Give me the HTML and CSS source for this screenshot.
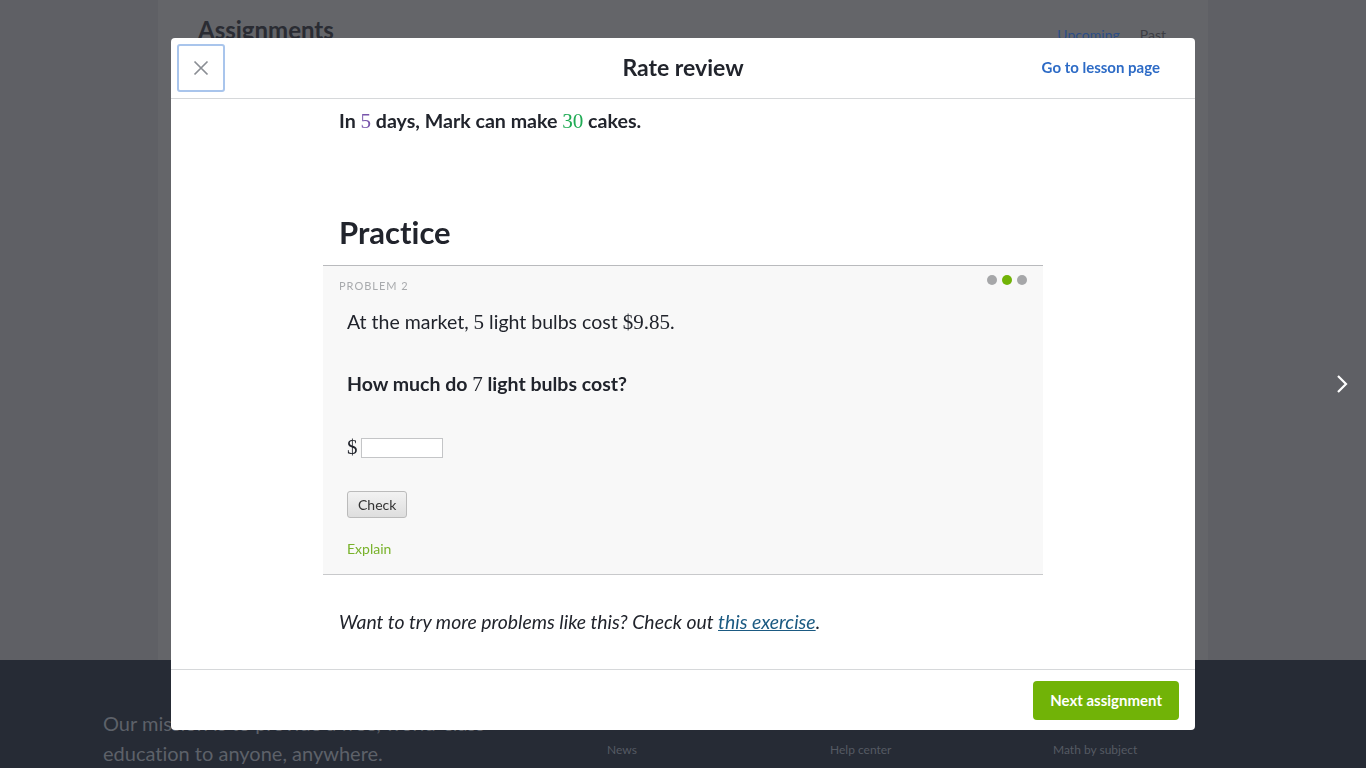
FILE: index.html
```html
<!DOCTYPE html>
<html lang="en">
<head>
    <meta charset="UTF-8">
    <meta name="viewport" content="width=device-width, initial-scale=1.0">
    <title>Rate review</title>
    <link rel="stylesheet" href="styles.css">
</head>
<body>
    <div class="page">
        <div class="page-main">
            <div class="page-head">
                <h1>Assignments</h1>
                <div class="page-tabs">
                    <a class="tab active">Upcoming</a>
                    <a class="tab">Past</a>
                </div>
            </div>
        </div>
        <footer class="site-footer">
            <p class="mission">Our mission is to provide a free, world-class education to anyone, anywhere.</p>
            <div class="footer-links">
                <span>News</span>
                <span>Help center</span>
                <span>Math by subject</span>
            </div>
        </footer>
    </div>

    <div class="modal">
        <div class="modal-header">
            <div class="close-cell">
                <button class="close-btn" aria-label="Close">
                    <svg width="16" height="16" viewBox="0 0 16 16">
                        <path d="M1.5 1.5 L14.5 14.5 M14.5 1.5 L1.5 14.5" stroke="#8a8e94" stroke-width="1.7" fill="none"/>
                    </svg>
                </button>
            </div>
            <h2 class="modal-title">Rate review</h2>
            <div class="lesson-cell"><a class="lesson-link">Go to lesson page</a></div>
        </div>

        <div class="modal-body">
            <div class="content">
                <p class="lead">In <span class="num purple">5</span> days, Mark can make <span class="num green">30</span> cakes.</p>

                <h3 class="section-title">Practice</h3>

                <div class="problem-card">
                    <div class="problem-top">
                        <span class="problem-label">Problem 2</span>
                        <div class="dots">
                            <span class="dot"></span>
                            <span class="dot current"></span>
                            <span class="dot"></span>
                        </div>
                    </div>
                    <p class="problem-text">At the market, <span class="num">5</span> light bulbs cost <span class="num">$9.85</span>.</p>
                    <p class="problem-text question">How much do <span class="num">7</span> light bulbs cost?</p>
                    <div class="answer-row">
                        <span class="num dollar">$</span>
                        <input type="text" class="answer-input">
                    </div>
                    <button class="check-btn">Check</button>
                    <a class="explain">Explain</a>
                </div>

                <p class="more">Want to try more problems like this? Check out <a class="exercise-link">this exercise</a>.</p>
            </div>
        </div>

        <div class="modal-footer">
            <button class="next-btn">Next assignment</button>
        </div>
    </div>

    <div class="next-arrow">
        <svg width="14" height="20" viewBox="0 0 14 20">
            <path d="M3 2 L11 10 L3 18" stroke="#ffffff" stroke-width="2.2" fill="none"/>
        </svg>
    </div>
</body>
</html>
```

FILE: styles.css
```css
* {
    box-sizing: border-box;
}

body {
    margin: 0;
    font-family: Lato, "Noto Sans", sans-serif;
    font-variant-ligatures: none;
    background-color: #5f6065;
    color: #21242c;
    overflow: hidden;
}

/* page behind the dialog (dimmed) */
.page {
    height: 768px;
    display: flex;
    flex-direction: column;
}

.page-main {
    width: 1050px;
    height: 660px;
    margin: 0 auto;
    background-color: #646569;
    padding: 14px 40px 0 40px;
}

.page-head {
    display: flex;
    justify-content: space-between;
    align-items: flex-start;
}

.page-head h1 {
    margin: 0;
    font-size: 24px;
    line-height: 32px;
    color: #2a2c33;
}

.page-tabs {
    display: flex;
    gap: 20px;
    padding-top: 12px;
    padding-right: 2px;
    font-size: 14px;
}

.tab {
    color: #3c3d43;
}

.tab.active {
    color: #2b4d86;
}

.site-footer {
    flex: 1;
    background-color: #262b35;
    display: flex;
    padding: 48px 0 0 103px;
}

.mission {
    margin: 0;
    width: 400px;
    font-size: 20px;
    line-height: 30px;
    color: #5d6169;
}

.footer-links {
    display: flex;
    margin-left: 104px;
    padding-top: 34px;
    font-size: 12px;
    color: #555a63;
}

.footer-links span {
    width: 223px;
}

/* dialog */
.modal {
    position: fixed;
    top: 38px;
    left: 171px;
    width: 1024px;
    height: 692px;
    background-color: #ffffff;
    border-radius: 4px;
    display: flex;
    flex-direction: column;
    overflow: hidden;
}

.modal-header {
    height: 61px;
    border-bottom: 1px solid #d6d8da;
    display: grid;
    grid-template-columns: 1fr auto 1fr;
    align-items: center;
}

.close-cell {
    padding-left: 6px;
}

.close-btn {
    width: 48px;
    height: 48px;
    border: 2px solid #a9c5ec;
    border-radius: 3px;
    background: #ffffff;
    display: flex;
    align-items: center;
    justify-content: center;
    padding: 0;
}

.modal-title {
    margin: 0 0 2px 0;
    font-size: 23px;
    font-weight: 700;
    color: #21242c;
}

.lesson-cell {
    text-align: right;
    padding-right: 35px;
    padding-bottom: 3px;
}

.lesson-link {
    font-size: 15px;
    font-weight: 700;
    color: #2d6bc6;
}

.modal-body {
    flex: 1;
    overflow: hidden;
}

.content {
    width: 720px;
    margin: 0 auto;
    padding-top: 7px;
}

.num {
    font-family: "Liberation Serif", "DejaVu Serif", serif;
    font-weight: 400;
    font-size: 1.08em;
}

.num.purple {
    color: #7854ab;
}

.num.green {
    color: #1fab54;
}

.lead {
    margin: 0 16px;
    font-size: 19.6px;
    line-height: 30px;
    font-weight: 700;
}

.section-title {
    margin: 76px 16px 13px 16px;
    font-size: 31px;
    line-height: 40px;
    font-weight: 700;
}

.problem-card {
    background-color: #f8f8f8;
    border-top: 1px solid #b9babd;
    border-bottom: 1px solid #c8c9cb;
    padding: 9px 16px 15px 16px;
}

.problem-top {
    display: flex;
    justify-content: space-between;
    align-items: flex-start;
    height: 22px;
}

.problem-label {
    padding-top: 3px;
    font-size: 11px;
    line-height: 16px;
    letter-spacing: 1px;
    text-transform: uppercase;
    color: #a8aaad;
}

.dots {
    display: flex;
    gap: 5px;
}

.dot {
    width: 10px;
    height: 10px;
    border-radius: 50%;
    background-color: #a6a7a9;
}

.dot.current {
    background-color: #71b307;
}

.problem-text {
    margin: 10px 8px 0 8px;
    font-size: 19.5px;
    line-height: 30px;
}

.problem-text.question {
    margin-top: 32px;
    font-weight: 700;
}

.answer-row {
    margin: 33px 8px 0 8px;
    height: 30px;
    display: flex;
    align-items: center;
    gap: 3px;
}

.dollar {
    font-size: 21px;
}

.answer-input {
    width: 82px;
    height: 20px;
    border: 1px solid #c4c5c7;
    background: #ffffff;
    margin-top: 2px;
}

.check-btn {
    display: block;
    margin: 29px 8px 0 8px;
    height: 27px;
    padding: 0 10px;
    font-family: Lato, sans-serif;
    font-size: 14px;
    color: #333333;
    border: 1px solid #bbbbbb;
    border-radius: 3px;
    background: linear-gradient(#f2f2f2, #dedede);
}

.explain {
    display: block;
    margin: 21px 8px 0 8px;
    font-size: 14px;
    line-height: 20px;
    color: #78b22a;
}

.more {
    margin: 32px 16px 0 16px;
    font-size: 19.4px;
    line-height: 30px;
    font-style: italic;
}

.exercise-link {
    color: #1b5a82;
    text-decoration: underline;
}

.modal-footer {
    height: 61px;
    border-top: 1px solid #d6d8da;
    display: flex;
    justify-content: flex-end;
    align-items: center;
    padding-right: 16px;
}

.next-btn {
    height: 39px;
    padding: 0 17px;
    border: none;
    border-radius: 4px;
    background-color: #71b307;
    color: #ffffff;
    font-family: Lato, sans-serif;
    font-size: 15px;
    font-weight: 700;
}

.next-arrow {
    position: fixed;
    top: 374px;
    left: 1335px;
}
```
